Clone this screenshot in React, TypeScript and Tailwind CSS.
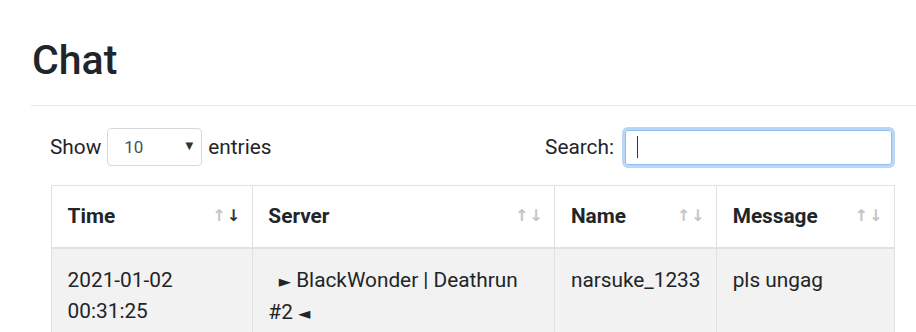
import React from "react";

function SortIcon({ active }: { active?: boolean }) {
  return (
    <span className="flex items-center gap-[1px] text-[16px] leading-none mr-[-4px]" style={{ fontFamily: "'DejaVu Sans', sans-serif" }}>
      <span className="text-[#c4c4c4]">↑</span>
      <span className={active ? "text-[#333]" : "text-[#c4c4c4]"}>↓</span>
    </span>
  );
}

export default function App() {
  const headers: { label: string; w: string; active?: boolean }[] = [
    { label: "Time", w: "w-[201px]", active: true },
    { label: "Server", w: "w-[303px]" },
    { label: "Name", w: "w-[160px]" },
    { label: "Message", w: "w-[178px]" },
  ];
  return (
    <div className="w-[916px] h-[332px] overflow-hidden bg-white text-[#212529]" style={{ fontFamily: "Roboto, 'Noto Sans', sans-serif" }}>
      <div className="pl-[31px]">
        <h2 className="pt-[35px] pl-[1px] text-[41px] leading-[50px] font-medium">Chat</h2>
        <div className="mt-[20px] h-px bg-[#e6e6e6]" />
      </div>
      <div className="pl-[51px] pr-[21px]">
        <div className="mt-[21px] flex items-center justify-between h-[40px] text-[20.8px] leading-[31px]">
          <div className="flex items-center">
            <span className="-ml-[1px]">Show</span>
            <div className="ml-[6px] relative w-[95px] h-[38px] border border-[#d6d9dc] rounded-[4px] flex items-center pl-[16px] text-[17px] text-[#495057]">
              10
              <span className="absolute right-[8px] top-[12px] text-[10px] leading-none text-[#333]" style={{ fontFamily: "'DejaVu Sans', sans-serif" }}>▼</span>
            </div>
            <span className="ml-[6px]">entries</span>
          </div>
          <div className="flex items-center">
            <span>Search:</span>
            <div className="ml-[8px] w-[273px] h-[41px] rounded-[6px] border-[3px] border-[#b9d6f7] flex items-center">
              <div className="w-full h-full rounded-[3px] border border-[#8fbdf0] bg-white flex items-center pl-[11px]">
                <div className="w-px h-[22px] bg-[#333]" />
              </div>
            </div>
          </div>
        </div>
        <table className="mt-[18px] border-collapse text-[20.8px] leading-[31.2px]">
          <thead>
            <tr>
              {headers.map((h) => (
                <th key={h.label} className={`${h.w} border border-[#dee2e6] border-b-[2px] px-[15.6px] h-[62px] text-left font-bold align-middle`}>
                  <div className="flex items-center justify-between">
                    <span>{h.label}</span>
                    <SortIcon active={h.active} />
                  </div>
                </th>
              ))}
            </tr>
          </thead>
          <tbody>
            <tr className="bg-[#f2f2f2]">
              <td className="border border-[#dee2e6] px-[15.6px] pt-[16px] pb-[15.6px] align-top">
                2021-01-02
                <br />
                00:31:25
              </td>
              <td className="border border-[#dee2e6] px-[15.6px] pt-[16px] pb-[15.6px] align-top">
                {"\u00a0\u00a0"}
                <span style={{ fontFamily: "'DejaVu Sans', sans-serif" }} className="text-[16px]">►</span> BlackWonder | Deathrun #2{" "}
                <span style={{ fontFamily: "'DejaVu Sans', sans-serif" }} className="text-[16px]">◄</span>
              </td>
              <td className="border border-[#dee2e6] px-[15.6px] pt-[16px] pb-[15.6px] align-top">narsuke_1233</td>
              <td className="border border-[#dee2e6] px-[15.6px] pt-[16px] pb-[15.6px] align-top">pls ungag</td>
            </tr>
          </tbody>
        </table>
      </div>
    </div>
  );
}
